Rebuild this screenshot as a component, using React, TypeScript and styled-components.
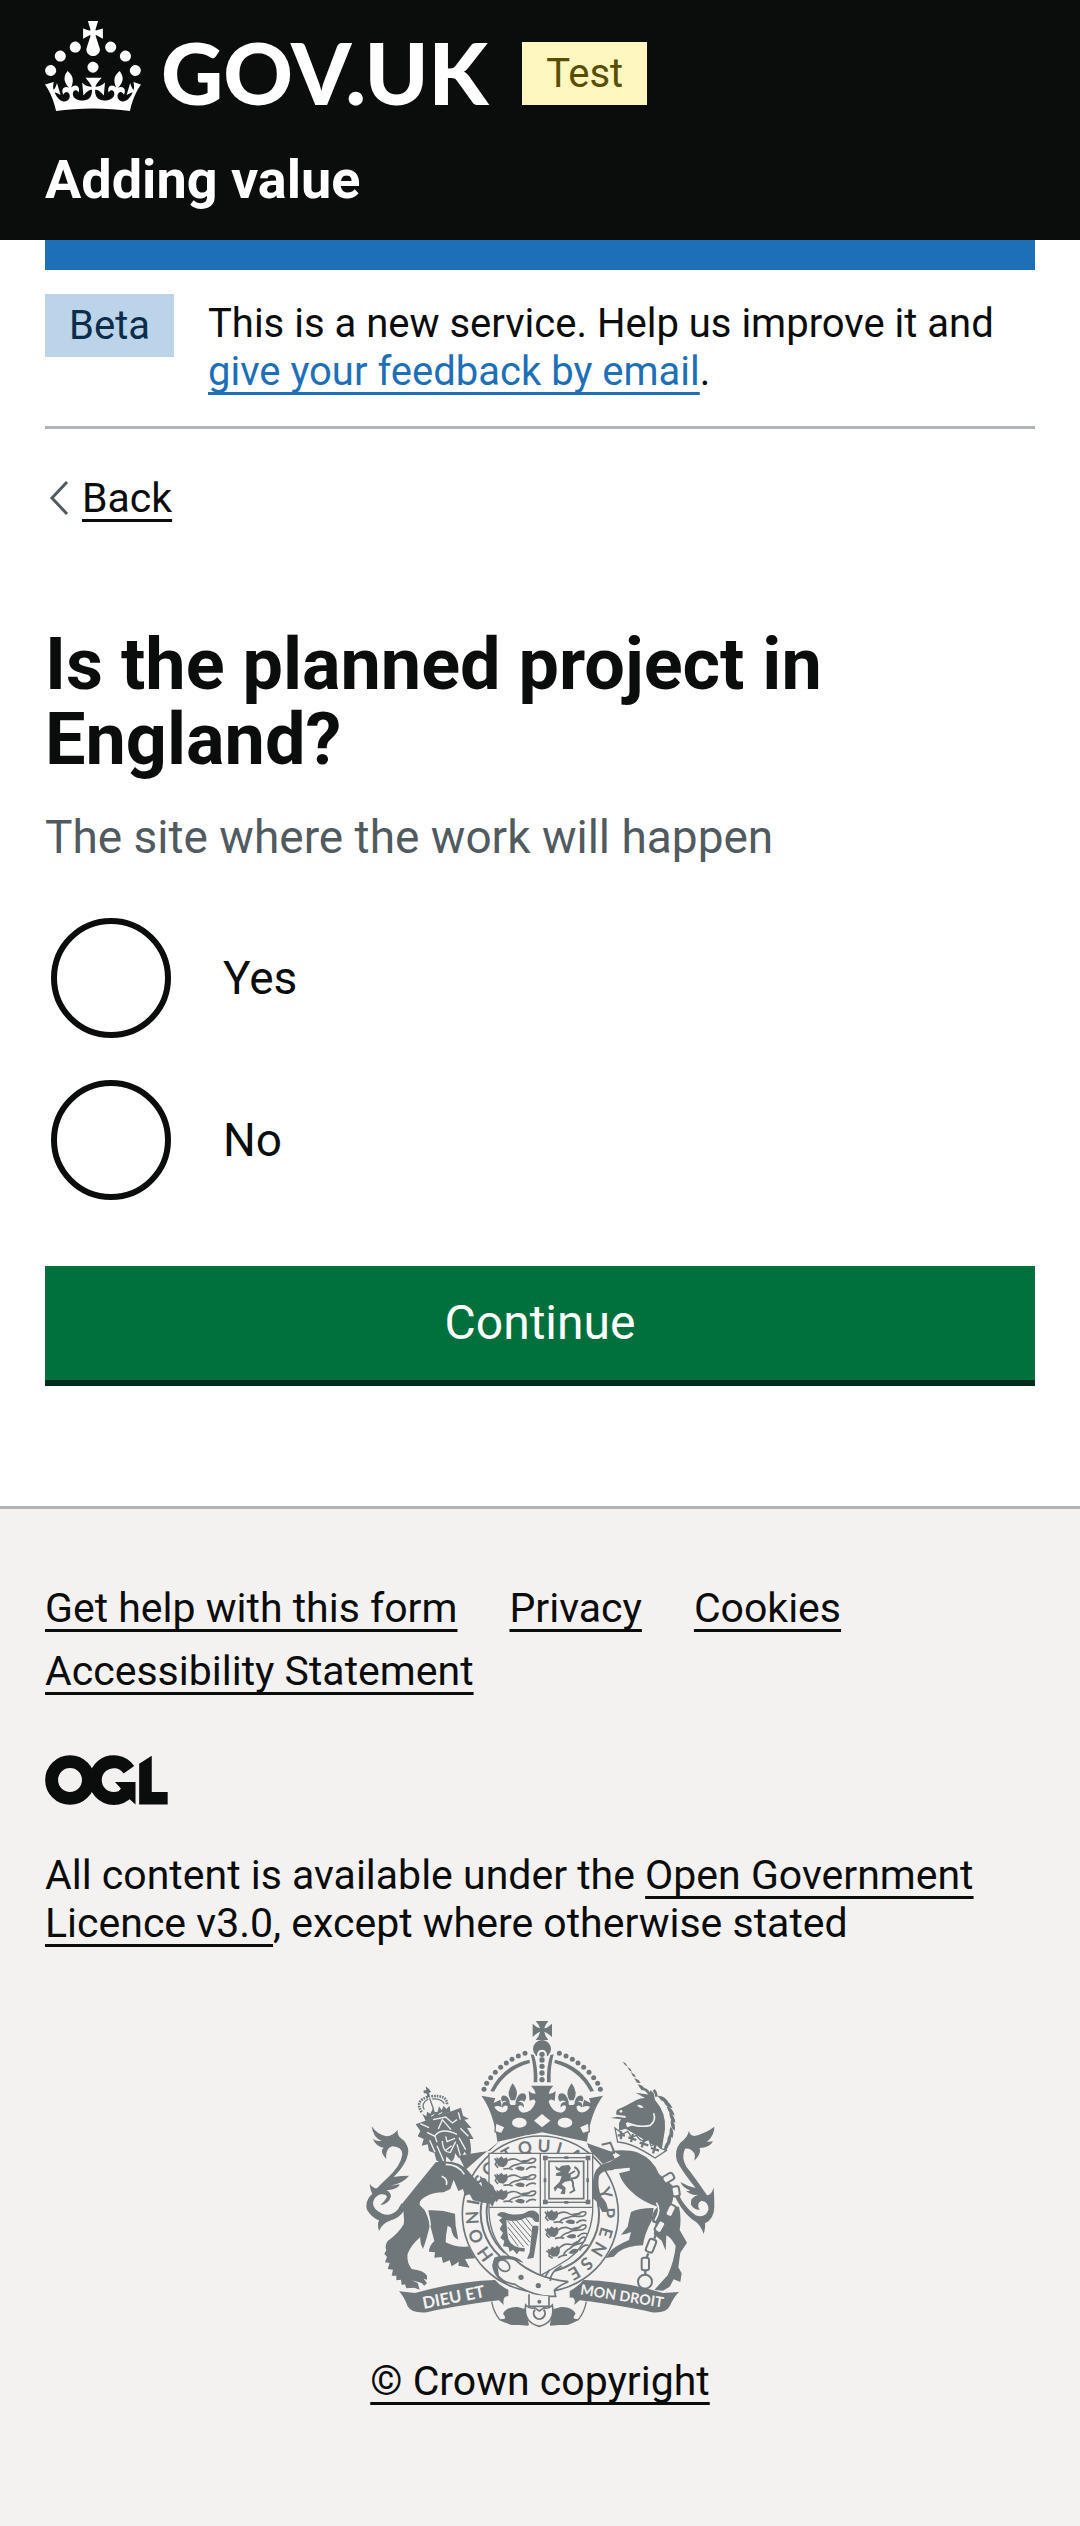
import React from 'react';
import styled, { createGlobalStyle } from 'styled-components';

const ink = '#0b0c0c';
const grey = '#f3f2f1';
const line = '#b1b4b6';
const blue = '#1d70b8';
const armsGrey = '#6f777a';

const GlobalStyle = createGlobalStyle`
  *, *::before, *::after { box-sizing: border-box; }
  body {
    margin: 0;
    background: ${grey};
    color: ${ink};
    font-family: Roboto, "Liberation Sans", sans-serif;
    font-size: 40px;
    line-height: 48px;
  }
`;

const Page = styled.div`
  background: #fff;
`;

const Container = styled.div`
  padding: 0 45px;
`;

const Header = styled.header`
  background: ${ink};
  color: #fff;
  padding: 21px 45px 30px;
`;

const Brand = styled.div`
  display: flex;
  align-items: center;
  gap: 34px;
  margin-bottom: 39px;
`;

const HomeLink = styled.a`
  display: flex;
  align-items: center;
  gap: 20px;
  color: inherit;
  text-decoration: none;
`;

const Wordmark = styled.span`
  padding-top: 12px;
  font: 900 86px/78px Lato, sans-serif;
`;

const Tag = styled.strong<{ $tone: 'yellow' | 'blue' }>`
  flex: none;
  padding: 0 24px;
  font-weight: 400;
  line-height: 63px;
  color: ${(p) => (p.$tone === 'yellow' ? '#594d00' : '#0c2d4a')};
  background: ${(p) => (p.$tone === 'yellow' ? '#fff7bf' : '#bbd4ea')};
`;

const BrandTag = styled.div`
  display: flex;
  padding-top: 15px;
`;

const ServiceName = styled.a`
  display: block;
  color: inherit;
  font-size: 54px;
  font-weight: 700;
  line-height: 60px;
  text-decoration: none;
`;

const BlueBar = styled.div`
  height: 30px;
  background: ${blue};
`;

const PhaseBanner = styled.div`
  display: flex;
  align-items: flex-start;
  gap: 34px;
  padding: 24px 0 30px;
  border-bottom: 3px solid ${line};
`;

const PhaseText = styled.p`
  margin: 0;
  padding-top: 6px;
`;

const Link = styled.a<{ $color?: string }>`
  color: ${(p) => p.$color ?? ink};
  text-decoration: underline;
  text-decoration-thickness: 3px;
  text-underline-offset: 7px;
  text-decoration-skip-ink: none;
`;

const BackRow = styled.div`
  display: flex;
  align-items: center;
  margin: 45px 0 105px;
  font-size: 41px;
`;

const BackArrow = styled.svg`
  width: 37px;
  height: 36px;
`;

const Fieldset = styled.fieldset`
  min-width: 0;
  margin: 0;
  padding: 0;
  border: 0;
`;

const Legend = styled.legend`
  padding: 0;
`;

const Heading = styled.h1`
  margin: 0 0 30px;
  font-size: 72px;
  font-weight: 700;
  line-height: 75px;
`;

const Hint = styled.div`
  margin-bottom: 45px;
  color: #505a5f;
  font-size: 46px;
  line-height: 60px;
`;

const Radios = styled.div`
  display: grid;
  gap: 30px;
  margin-bottom: 60px;
`;

const RadioRow = styled.div`
  display: flex;
  align-items: center;
  gap: 52px;
  padding: 6px;
`;

const RadioInput = styled.input`
  flex: none;
  appearance: none;
  width: 120px;
  height: 120px;
  margin: 0;
  border: 6px solid ${ink};
  border-radius: 50%;
  background: #fff;
  cursor: pointer;

  &:checked {
    background: radial-gradient(${ink} 0 30px, #fff 31px);
  }
`;

const RadioLabel = styled.label`
  font-size: 46px;
  line-height: 60px;
`;

const ContinueButton = styled.button`
  display: block;
  width: 100%;
  padding: 27px 30px;
  border: 0;
  background: #00703c;
  box-shadow: 0 6px 0 #002d18;
  color: #fff;
  font-family: inherit;
  font-size: 48px;
  line-height: 60px;
  cursor: pointer;
`;

const Main = styled.main`
  padding-bottom: 126px;
`;

const Footer = styled.footer`
  padding: 75px 45px 120px;
  border-top: 3px solid ${line};
  background: ${grey};
  font-size: 41px;
`;

const FooterLinks = styled.ul`
  display: flex;
  flex-wrap: wrap;
  gap: 15px 52px;
  margin: 0 0 60px;
  padding: 0;
  list-style: none;
`;

const OglMark = styled.svg`
  display: block;
  width: 123px;
  height: 50px;
  margin-bottom: 46px;
`;

const Licence = styled.p`
  margin: 0 0 72px;
`;

const Copyright = styled.div`
  display: flex;
  flex-direction: column;
  align-items: center;
  gap: 28px;
`;

const Arms = styled.svg`
  display: block;
  width: 350px;
  height: 310px;
`;

const Crown = () => (
  <svg width="96" height="90" viewBox="0 0 32 30" fill="currentColor" aria-hidden="true">
    <path d="M22.6 10.4c-1 .4-2-.1-2.4-1-.4-.9.1-2 1-2.4.9-.4 2 .1 2.4 1s-.1 2-1 2.4m-5.9 6.7c-.9.4-2-.1-2.4-1-.4-.9.1-2 1-2.4.9-.4 2 .1 2.4 1s-.1 2-1 2.4m10.8-3.7c-1 .4-2-.1-2.4-1-.4-.9.1-2 1-2.4.9-.4 2 .1 2.4 1s0 2-1 2.4m3.3 4.8c-1 .4-2-.1-2.4-1-.4-.9.1-2 1-2.4.9-.4 2 .1 2.4 1s-.1 2-1 2.4M17 4.7l2.3 1.2V2.5l-2.3.7-.2-.2.9-3h-3.4l.9 3-.2.2c-.1.1-2.3-.7-2.3-.7v3.4L15 4.7c.1.1.1.2.2.2l-1.3 4c-.1.2-.1.4-.1.6 0 1.1.8 2 1.9 2.2h.7c1-.2 1.9-1.1 1.9-2.1 0-.2 0-.4-.1-.6l-1.3-4c-.1-.2 0-.2.1-.3m-7.6 5.7c.9.4 2-.1 2.4-1 .4-.9-.1-2-1-2.4-.9-.4-2 .1-2.4 1s0 2 1 2.4m-5 3c.9.4 2-.1 2.4-1 .4-.9-.1-2-1-2.4-.9-.4-2 .1-2.4 1s.1 2 1 2.4m-3.2 4.8c.9.4 2-.1 2.4-1 .4-.9-.1-2-1-2.4-.9-.4-2 .1-2.4 1s0 2 1 2.4m14.8 11c4.4 0 8.6.3 12.3.8 1.1-4.5 2.4-7 3.7-8.8l-2.5-.9c.2 1.3.3 1.9 0 2.7-.4-.4-.8-1.1-1.1-2.3l-1.2 4c.7-.5 1.3-.8 2-.9-1.1 2.5-2.6 3.1-3.5 3-1.1-.2-1.7-1.2-1.5-2.1.3-1.2 1.5-1.5 2.1-.1 1.1-2.3-.8-3-2-2.3 1.9-1.9 2.1-3.5.6-5.6-2.1 1.6-2.1 3.2-1.2 5.5-1.2-1.4-3.2-.6-2.5 1.6.9-1.4 2.1-.5 1.9.8-.2 1.1-1.7 2.1-3.5 1.9-2.7-.2-2.9-2.1-2.9-3.6.7-.1 1.9.5 2.9 1.9l.4-4.3c-1.1 1.1-2.1 1.4-3.2 1.4.4-1.2 2.1-3 2.1-3h-5.4s1.7 1.9 2.1 3c-1.1 0-2.1-.2-3.2-1.4l.4 4.3c1-1.4 2.2-2 2.9-1.9-.1 1.5-.2 3.4-2.9 3.6-1.9.2-3.4-.8-3.5-1.9-.2-1.3 1-2.2 1.9-.8.7-2.3-1.2-3-2.5-1.6.9-2.2.9-3.9-1.2-5.5-1.5 2-1.3 3.7.6 5.6-1.2-.7-3.1 0-2 2.3.6-1.4 1.8-1.1 2.1.1.2.9-.3 1.9-1.5 2.1-.9.2-2.4-.5-3.5-3 .6 0 1.2.3 2 .9l-1.2-4c-.3 1.1-.7 1.9-1.1 2.3-.3-.8-.2-1.4 0-2.7l-2.9.9C1.3 23 2.6 25.5 3.7 30c3.7-.5 7.9-.8 12.3-.8" />
  </svg>
);

const Ogl = () => (
  <OglMark viewBox="14 31 371 150" role="img" aria-label="Open Government Licence">
    <circle cx="89.5" cy="106" r="55.5" fill="none" stroke={ink} strokeWidth="39" />
    <path d="M267 75A55.5 55.5 0 1 0 262 144" fill="none" stroke={ink} strokeWidth="39" />
    <path d="M225 112H287V180L266 161L236 141L243 132Z" fill={ink} />
    <path d="M298 57L336 33V142H384V180H298Z" fill={ink} />
  </OglMark>
);

const garterLetters: [string, number][] = [
  ['H', 234], ['O', 251], ['N', 267], ['I', 280], ['S', 299], ['O', 312],
  ['T', 331], ['Q', 347], ['U', 3], ['I', 16], ['A', 31],
  ['Y', 72], ['P', 89], ['E', 106], ['N', 121], ['S', 137], ['E', 150],
];

const archBeads = [[407, 271], [415, 253], [427, 236], [441, 220], [457, 205], [474, 192], [491, 181], [510, 171], [530, 163]];

const chainLinks: [number, number, number, number][] = [
  [240, 372, 60, 34], [262, 412, -10, 30], [247, 470, 25, 36], [215, 518, 30, 36], [188, 575, 22, 40], [171, 630, 0, 38],
];

const manePlumes: [number, number, number][] = [
  [222, 135, 20], [236, 150, 30], [245, 170, 40], [250, 190, 50], [252, 212, 62], [248, 234, 72], [242, 255, 85], [234, 275, 98],
];

const Passant = ({ x, y, turn = 0 }: { x: number; y: number; turn?: number }) => (
  <g transform={`translate(${x} ${y}) rotate(${turn})`}>
    <path d="M8 2L14 7L22 0L29 7L38 3Q45 16 37 26L28 33L14 30Q4 18 8 2Z" />
    <path d="M38 14Q58 2 74 12T112 7Q128 4 124 13T100 20T72 24Q54 26 46 36" fill="none" stroke={armsGrey} strokeWidth="5" />
    <path d="M62 36Q78 24 92 34L90 42Q74 46 62 36Z" />
    <path d="M96 40Q112 26 126 34M28 38Q44 34 56 40M2 6L8 16L4 24L12 34" fill="none" stroke={armsGrey} strokeWidth="5" />
    <path d="M82 12L100 10L110 14L92 18Z" />
  </g>
);

const CrownHalf = () => (
  <g>
    {archBeads.map(([x, y]) => (
      <circle key={x} cx={x} cy={y} r="7.5" />
    ))}
    <path d="M426 276Q462 200 543 182L545 192Q472 212 437 278Z" />
    <path d="M547 166L557 168Q569 205 567 250H556Q558 205 547 166Z" />
    {/* outer half cross */}
    <path d="M399 290L441 298L436 312L456 302L461 325Q446 318 438 324Q448 342 466 340Q480 336 478 322Q470 316 462 326Q458 306 478 308L488 318H500L508 308Q530 308 526 326Q518 314 510 322Q510 338 524 341Q552 340 562 308Q558 296 544 306L541 276Q552 286 562 284Q560 272 548 260H582V400L447 428Q436 340 399 290Z" />
    {/* fleur-de-lis head */}
    <path d="M493 253Q506 270 506 284Q504 296 500 304H487Q480 292 481 280Q484 264 493 253Z" />
    <path d="M484 308Q478 286 462 290Q454 298 462 308Q470 300 484 316ZM502 308Q510 276 530 284Q538 296 528 308Q518 298 502 316Z" />
    <ellipse cx="513" cy="371" rx="22" ry="15" fill={grey} />
    <path d="M442 372L470 384L460 404L440 398Z" fill={grey} stroke={armsGrey} strokeWidth="4" />
  </g>
);

const RoyalArms = () => (
  <Arms viewBox="50 60 1050 930" fill={armsGrey} aria-hidden="true">
    {/* imperial crown */}
    <CrownHalf />
    <g transform="translate(1163 0) scale(-1 1)"><CrownHalf /></g>
    <path d="M562 66H600Q590 78 588 88Q598 86 611 74V114Q598 102 588 98Q590 112 600 123H562Q573 112 575 98Q565 102 553 114V74Q565 86 575 88Q573 78 562 66Z" />
    <circle cx="581" cy="150" r="27" />
    <path d="M566 176Q564 152 581 152Q598 152 596 176Z" fill={grey} />
    {[166, 183, 202, 222, 242].map((y) => <circle key={y} cx="581" cy={y} r="8" />)}
    <path d="M581 345L606 365L581 385L557 365Z" fill={grey} />

    {/* shoulders behind the garter */}
    <path d="M352 512L330 470L380 462L425 455L455 425L400 470Z" />
    <path d="M715 432L790 458L800 480L750 500Z" />

    {/* garter */}
    <circle cx="576" cy="645" r="240" fill={grey} />
    <circle cx="576" cy="645" r="234" fill="none" stroke={armsGrey} strokeWidth="5" />
    <path d="M402 600A176 176 0 0 0 455 772M418 610A160 160 0 0 0 470 762M748 610A174 174 0 0 1 620 815" fill="none" stroke={armsGrey} strokeWidth="6" />
    <g fontFamily="Lato, sans-serif" fontSize="52" fontWeight="700" textAnchor="middle">
      {garterLetters.map(([letter, angle]) => (
        <text key={angle} x="576" y="459" transform={`rotate(${angle} 576 645)`}>{letter}</text>
      ))}
    </g>

    {/* shield */}
    <path d="M422 463H733V640Q726 730 660 780Q620 806 576 830Q530 806 492 780Q426 730 422 640Z" fill={grey} stroke={armsGrey} strokeWidth="4" />
    <path d="M576 463V828M422 625H733" fill="none" stroke={armsGrey} strokeWidth="4" />
    <Passant x={437} y={472} />
    <Passant x={437} y={521} />
    <Passant x={437} y={570} />
    <Passant x={588} y={632} />
    <Passant x={588} y={684} turn={-6} />
    <Passant x={590} y={750} turn={-20} />
    <rect x="590" y="476" width="128" height="134" fill="none" stroke={armsGrey} strokeWidth="4" />
    <rect x="602" y="487" width="104" height="112" fill="none" stroke={armsGrey} strokeWidth="5" />
    <path d="M584 470h14v14h-14zM712 470h14v14h-14zM584 602h14v14h-14zM712 602h14v14h-14zM648 472h12v8h-12zM648 606h12v8h-12zM586 538h8v12h-8zM714 538h8v12h-8z" />
    <path d="M620 500L632 508L640 500L662 498L668 508L660 522L668 530L664 546L650 548L640 556L652 566L650 586L636 584L642 572L628 566L620 578L616 566L634 548L640 532L622 530L624 522L638 518L624 512Z" />
    <path d="M664 540Q676 544 674 560L678 574L664 582M668 538Q690 540 692 520Q688 508 678 504M660 528L680 516" fill="none" stroke={armsGrey} strokeWidth="6" />
    {/* harp */}
    <path d="M446 648Q456 632 480 644Q520 652 540 636Q562 630 572 648V668Q558 672 552 658Q540 650 520 662Q490 668 474 664Q476 700 480 720Q490 746 530 748L528 758L512 756L506 766L494 752L484 758L480 744L464 742L468 726L456 716L464 702L454 690L462 676L452 664L462 656Z" />
    <path d="M552 680H570V692L556 776L536 780L544 760Z" />
    <path d="M478 666L540 740M490 664L545 730M504 664L548 714M518 660L550 698M530 654L552 682M478 684L526 744M482 704L510 742" stroke={armsGrey} strokeWidth="3" />

    {/* belt, buckle and pendant */}
    <path d="M440 778Q470 764 500 782Q560 838 660 848Q630 860 618 874L622 892Q560 896 500 856Q440 846 434 800Z" fill={grey} stroke={armsGrey} strokeWidth="5" />
    <path d="M434 800Q430 770 480 770Q510 772 526 792L500 784Q470 776 446 790L452 830L480 856Q440 846 434 800Z" />
    <ellipse cx="466" cy="800" rx="20" ry="15" transform="rotate(40 466 800)" fill={grey} stroke={armsGrey} strokeWidth="5" />
    <circle cx="518" cy="835" r="8" />
    <circle cx="570" cy="860" r="8" />
    <path d="M606 846Q604 820 640 800M590 834L604 812" fill="none" stroke={armsGrey} strokeWidth="5" />
    <path d="M542 886V922H602V892" fill={grey} stroke={armsGrey} strokeWidth="5" />
    <circle cx="573" cy="908" r="6" />
    <g>
      <path d="M430 908Q436 940 454 962Q480 976 540 978M714 908Q708 940 690 962Q664 976 606 978" fill="none" stroke={armsGrey} strokeWidth="4" />
      <path d="M464 944Q476 922 508 924L530 930L542 978H490Q468 972 456 960Q480 962 464 944Z" />
      <path d="M682 944Q670 922 638 924L616 930L604 978H656Q678 972 690 960Q666 962 682 944Z" />
      <path d="M532 918Q546 932 558 926L573 936L588 926Q600 932 612 918Q622 970 573 982Q524 970 532 918Z" fill={grey} stroke={armsGrey} strokeWidth="5" />
      <path d="M560 932A17 17 0 1 0 586 932" fill="none" stroke={armsGrey} strokeWidth="6" />
    </g>

    {/* motto ribbon */}
    <path d="M152 877L200 882Q330 846 440 843Q456 862 480 872V892Q462 890 466 918L452 904Q320 920 236 940Q190 944 178 922Q168 894 152 877Z" />
    <path d="M992 879L944 882Q826 846 706 843Q690 862 664 876V896Q684 892 678 918L694 904Q826 920 910 940Q952 944 964 922Q976 894 992 879Z" />
    <g fontFamily="Lato, sans-serif" fontWeight="700" fontSize="50" fill={grey}>
      <text transform="translate(226 930) rotate(-11)">DIEU ET</text>
      <text transform="translate(694 886) rotate(9)" fontSize="43">MON DROIT</text>
    </g>

    {/* lion supporter */}
    <g transform="translate(30 240)">
      <path d="M130 372L118 392Q96 414 72 404Q44 392 44 372Q46 354 66 346Q84 344 86 354Q80 366 66 378Q92 376 98 352Q96 338 84 334Q124 330 124 316L96 320Q136 312 152 290Q128 290 106 294Q150 250 150 214Q146 190 128 178Q116 168 118 152Q106 170 84 172Q56 166 40 142Q44 176 70 186Q46 186 42 176Q52 202 76 206Q62 216 84 240Q80 208 102 202Q132 204 132 226Q128 260 88 296Q66 316 56 328Q44 328 34 314Q36 334 42 344Q18 366 26 392Q38 414 62 424Q56 438 62 456Q72 432 98 424Q124 416 136 396Z" />
      <path d="M232 250Q180 314 130 376Q140 410 136 436Q120 464 88 486Q78 500 84 514L78 524L86 534L80 550L94 552L88 570L104 572L100 590L114 590L114 604L128 602L130 618L140 616L144 628L168 626L184 632L178 612L160 604L190 612L198 620L206 612L192 594L168 590L206 602V590Q196 574 160 570Q144 550 148 524Q158 498 186 474Q184 492 194 510Q208 470 214 440Q210 412 198 392L184 378Q182 362 204 352Q224 340 256 340L276 330L286 302L300 336L314 330L320 350L334 346L344 364L380 372L396 374L402 384L408 370L416 360L398 346Q372 326 350 300L330 276Q300 240 232 250Z" />
      <path d="M210 394Q250 392 290 404L292 440L300 482Q282 476 278 446L268 440Q262 468 262 490Q300 508 330 502L350 538L320 540L334 566L300 560L302 548L280 562L274 544L254 552L250 534L228 536L230 520L212 518Q212 500 228 486L216 440Q212 410 210 394Z" />
      <path d="M200 384Q214 406 216 440" stroke={grey} strokeWidth="4" fill="none" />
      <path d="M364 290L404 320L412 338L426 352L414 370L404 350L376 340Z" />
      <path d="M250 292Q270 300 264 318M262 256Q300 256 318 286" stroke={grey} strokeWidth="5" fill="none" />
      <path d="M172 136L308 86L314 110L332 120L318 122L340 148L326 146L346 180L334 180Q342 216 334 238L318 218Q314 232 300 236L290 222Q290 240 280 248L264 232Q264 250 258 260L234 244L228 222L212 216L208 196L190 200L196 180L178 172L186 156Z" />
      <path d="M186 134L212 146M224 122L262 114L282 132L296 122M240 150L252 122L278 152M230 170Q250 144 296 166M206 160L230 172L236 190M262 172L266 188L290 178M252 186Q254 222 276 220L292 188M280 200L262 214M214 184L230 220M302 176L322 212M306 148L330 172M236 200L256 246M296 196L306 230M300 100L306 122" stroke={grey} strokeWidth="4" fill="none" />
      {/* the lion's own crown */}
      <path d="M192 104L204 112L206 98L216 104L224 88L230 100L238 98L242 82L250 94L256 80L264 90L274 80L276 98L202 126Z" />
      <path d="M218 112L228 106M240 106L252 100" stroke={grey} strokeWidth="3" />
      <path d="M190 100Q168 66 208 54M266 76Q266 46 218 52" fill="none" stroke={armsGrey} strokeWidth="8" strokeDasharray="5 3" />
      <path d="M198 92Q186 74 210 60M258 74Q248 58 222 60M214 58L226 92" fill="none" stroke={armsGrey} strokeWidth="4" />
      <path d="M202 22L212 30L218 38L212 42L216 56L206 54L206 44L196 42V34L204 34Z" />
    </g>

    {/* unicorn supporter */}
    <g transform="translate(720 165)">
      <path d="M103 23L112 28L118 38L110 33ZM117 39L126 44L131 53L124 50ZM127 54L139 62L143 70L134 67ZM137 72L151 78L157 87L146 86ZM148 90L162 95L170 106L156 104Z" />
      <path d="M142 116L184 122L186 108L196 118L200 138Q234 176 230 226L220 288L112 224L92 230V208L98 196L66 192L88 188L112 192L112 186L84 182Q80 166 98 162Q116 154 144 138Q156 132 170 132Z" />
      <path d="M158 104Q176 104 184 122M196 108Q204 116 204 128" stroke={armsGrey} strokeWidth="8" fill="none" />
      <path d="M146 154Q156 148 166 160Q154 166 146 154ZM112 206Q128 214 146 210L116 220Z" fill={grey} />
      <path d="M196 178Q204 200 186 214Q150 222 116 206" stroke={grey} strokeWidth="5" fill="none" />
      <circle cx="98" cy="172" r="4" fill={grey} />
      {manePlumes.map(([x, y, r]) => (
        <path key={y} transform={`translate(${x} ${y}) rotate(${r})`} d="M-16 -4Q0 -12 20 2Q4 12 -16 -4Z" />
      ))}
      <path d="M80 222L88 264Q130 266 200 312L234 290L216 282L204 270L188 276L182 256L168 262L154 256L144 244L130 250L118 232L104 240Z" fill={grey} stroke={armsGrey} strokeWidth="4" />
      <path d="M98 232V256M88 244H110M134 240L128 264M120 250L144 258M168 256L160 280M154 266L180 274M202 272L194 298M188 282L212 290" stroke={armsGrey} strokeWidth="7" />
      <path d="M72 290Q120 286 150 296Q196 316 212 360L254 396Q262 440 236 478Q214 520 192 504Q186 478 208 458Q160 444 124 408Q100 384 92 358L124 350V342L76 348Q40 348 32 366Q26 400 40 430Q56 440 60 474L42 474L24 442L12 432Q8 404 18 360Q28 330 64 324L96 304Z" />
      <path d="M196 462Q150 462 128 474Q122 496 118 518L98 542Q116 540 128 534L122 558Q80 576 66 592L52 612L76 608L90 594Q120 574 164 574Q168 540 190 500Z" />
      <path d="M212 456L272 458Q280 490 274 528L296 566L276 596L270 640L280 658L276 684L256 676L244 698L224 710L198 708L214 690L238 664Q258 620 262 576Q246 548 234 544L232 590L220 560L196 540Z" />
      <path d="M204 446Q220 466 200 500M76 348L124 344" stroke={grey} strokeWidth="5" fill="none" />
      <path d="M40 272L66 266L76 290L50 320M48 300L80 296M0 278L44 292" stroke={armsGrey} strokeWidth="6" fill="none" />
      <path d="M246 392Q272 470 320 502Q336 512 346 540Q352 520 350 508Q378 494 378 458Q378 430 376 400Q370 424 356 424Q320 370 294 338Q278 310 290 284Q306 280 318 298Q322 306 318 320Q340 300 334 282Q364 282 374 262L356 264Q380 240 378 218Q352 238 318 246Q304 244 302 230Q298 250 276 266Q256 290 266 322Q284 356 322 402Q296 396 276 384Q284 402 306 410Q298 412 292 410Q312 426 330 422Q304 430 308 452Q316 466 334 468Q322 448 340 440Q362 444 360 468Q350 494 322 484Q290 462 270 420Z" />
      {chainLinks.map(([x, y, r, h]) => (
        <g key={y} transform={`translate(${x} ${y}) rotate(${r})`}>
          <rect x="-11" y={-h / 2} width="22" height={h} rx="7" fill={grey} stroke={armsGrey} strokeWidth="6" />
        </g>
      ))}
      <path d="M231 492L228 500M203 540L198 554M180 598L175 610M171 650V662" stroke={armsGrey} strokeWidth="7" />
      <circle cx="170" cy="683" r="21" fill="none" stroke={armsGrey} strokeWidth="6" />
    </g>
  </Arms>
);

const answers = [
  { id: 'yes', label: 'Yes' },
  { id: 'no', label: 'No' },
];

const footerLinks = ['Get help with this form', 'Privacy', 'Cookies', 'Accessibility Statement'];

export default function App() {
  return (
    <Page>
      <GlobalStyle />
      <Header>
        <Brand>
          <HomeLink href="#">
            <Crown />
            <Wordmark>GOV.UK</Wordmark>
          </HomeLink>
          <BrandTag>
            <Tag $tone="yellow">Test</Tag>
          </BrandTag>
        </Brand>
        <ServiceName href="#">Adding value</ServiceName>
      </Header>

      <Container>
        <BlueBar />
        <PhaseBanner>
          <Tag $tone="blue">Beta</Tag>
          <PhaseText>
            This is a new service. Help us improve it and{' '}
            <Link $color={blue} href="#">give your feedback by email</Link>.
          </PhaseText>
        </PhaseBanner>

        <BackRow>
          <BackArrow viewBox="0 0 37 36" aria-hidden="true">
            <path d="M22 2L7 18L22 34" fill="none" stroke="#505a5f" strokeWidth="3" />
          </BackArrow>
          <Link href="#">Back</Link>
        </BackRow>

        <Main>
          <form onSubmit={(e) => e.preventDefault()}>
            <Fieldset aria-describedby="site-hint">
              <Legend>
                <Heading>Is the planned project in England?</Heading>
              </Legend>
              <Hint id="site-hint">The site where the work will happen</Hint>
              <Radios>
                {answers.map((a) => (
                  <RadioRow key={a.id}>
                    <RadioInput type="radio" name="in-england" id={a.id} value={a.id} />
                    <RadioLabel htmlFor={a.id}>{a.label}</RadioLabel>
                  </RadioRow>
                ))}
              </Radios>
            </Fieldset>
            <ContinueButton type="submit">Continue</ContinueButton>
          </form>
        </Main>
      </Container>

      <Footer>
        <FooterLinks>
          {footerLinks.map((text) => (
            <li key={text}>
              <Link href="#">{text}</Link>
            </li>
          ))}
        </FooterLinks>
        <Ogl />
        <Licence>
          All content is available under the <Link href="#">Open Government Licence v3.0</Link>, except where otherwise
          stated
        </Licence>
        <Copyright>
          <RoyalArms />
          <Link href="#">© Crown copyright</Link>
        </Copyright>
      </Footer>
    </Page>
  );
}
